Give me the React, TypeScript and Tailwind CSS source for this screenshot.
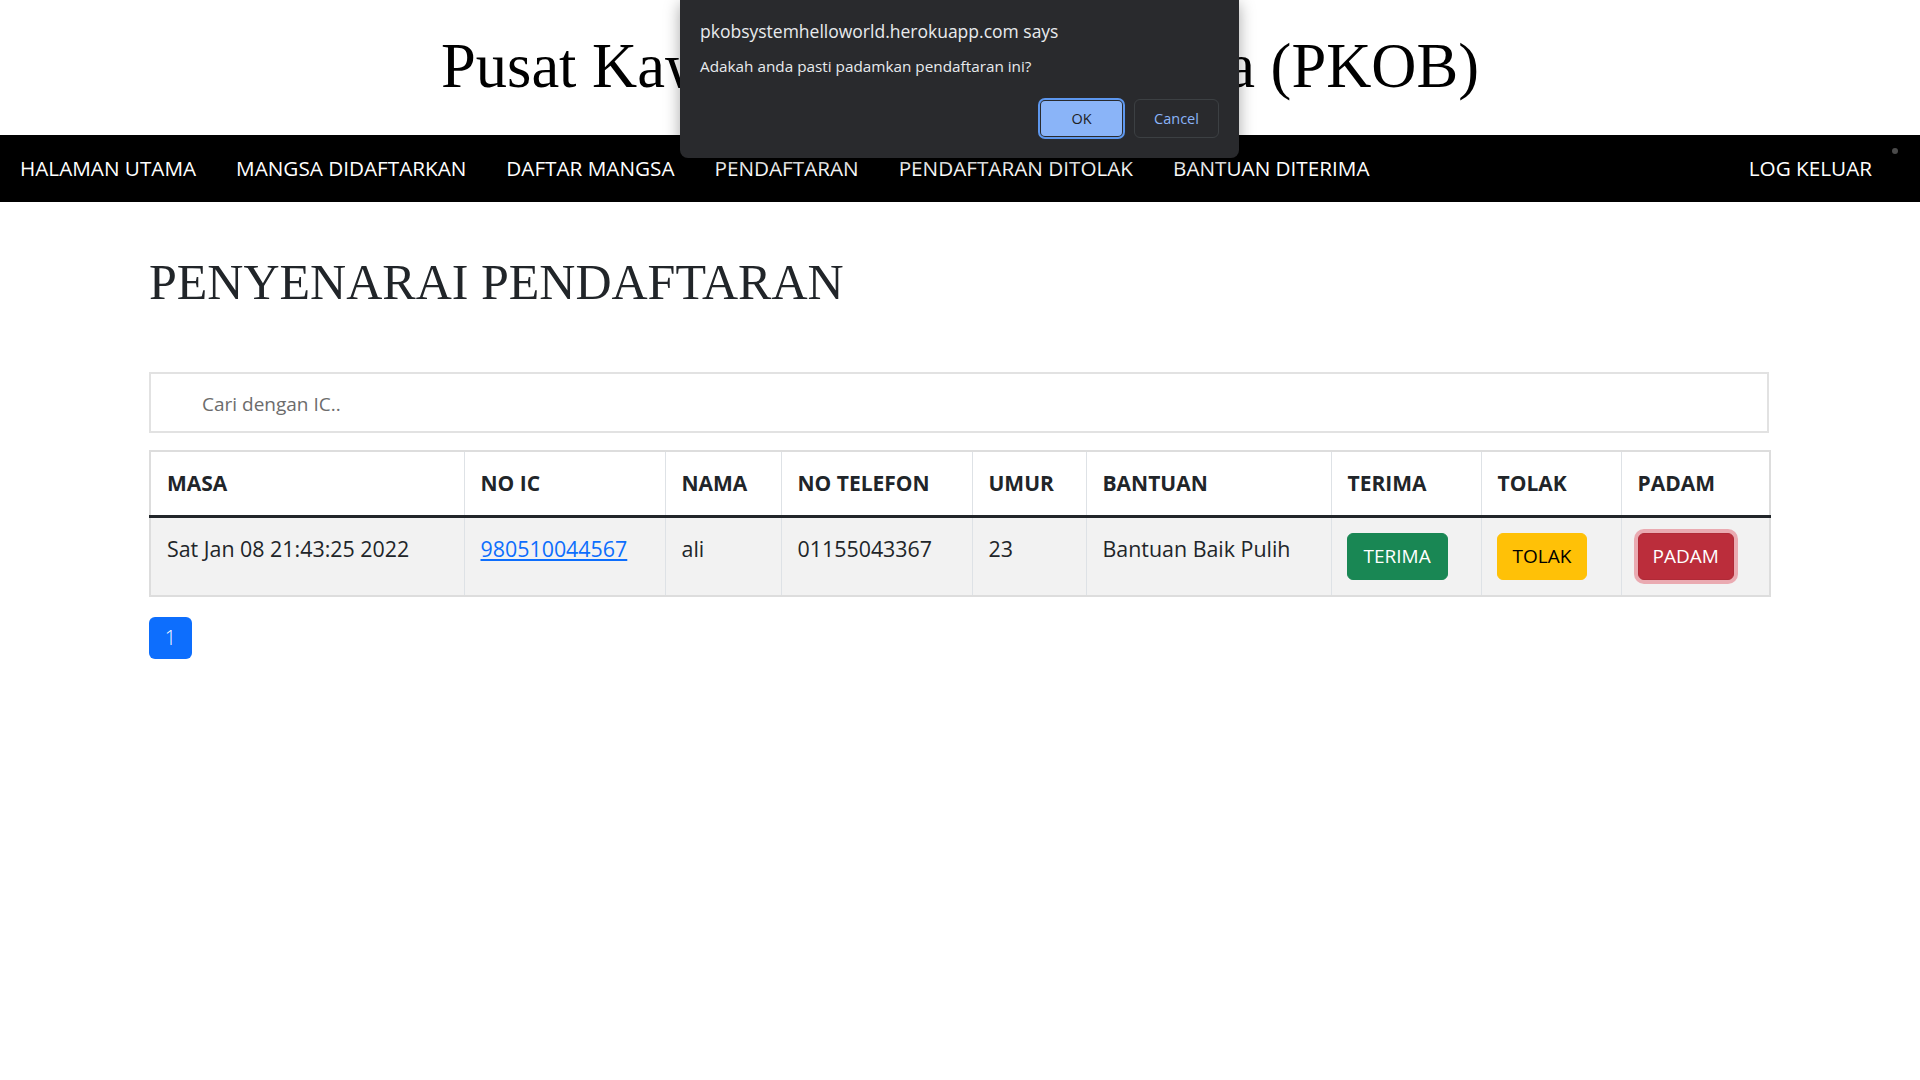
import React from 'react';

const navLinks = [
  'HALAMAN UTAMA',
  'MANGSA DIDAFTARKAN',
  'DAFTAR MANGSA',
  'PENDAFTARAN',
  'PENDAFTARAN DITOLAK',
  'BANTUAN DITERIMA',
];

const cell = 'border-x border-[#dee2e6] px-[16px] pt-[15px] pb-[15px] align-top leading-[32px]';

const App: React.FC = () => {
  return (
    <div className="relative min-h-[1080px] bg-white font-['Open_Sans','Noto_Sans',sans-serif] text-[#212529]">
      {/* Header */}
      <header className="flex h-[135px] items-center justify-center pb-[2px]">
        <h1 className="font-['Liberation_Serif',serif] text-[62.5px] font-normal leading-none text-black">
          Pusat Kawalan Operasi Bencana (PKOB)
        </h1>
      </header>

      {/* Navbar */}
      <nav className="relative flex h-[67px] items-center bg-black pr-[28px] text-[20.7px] text-white">
        {navLinks.map((l) => (
          <a key={l} href="#" className="px-[20px] leading-none">
            {l}
          </a>
        ))}
        <a href="#" className="ml-auto px-[20px] leading-none">
          LOG KELUAR
        </a>
        <span className="absolute left-[1892px] top-[13px] h-[6px] w-[6px] rounded-full bg-[#4a4a4a]" />
      </nav>

      {/* Main */}
      <main className="pl-[149px] pr-[151px]">
        <h2 className="mt-[55px] font-['Liberation_Serif',serif] text-[50px] font-normal leading-none text-[#212529]">
          PENYENARAI PENDAFTARAN
        </h2>

        <div className="mt-[65px] flex h-[61px] items-center border-2 border-[#e2e2e2] pl-[51px] pt-[3px] text-[19px] text-[#6c6c6c]">
          Cari dengan IC..
        </div>

        <table className="mt-[17px] w-[1620px] table-fixed border-collapse border-2 border-[#dddddd] text-[21.4px]">
          <colgroup>
            <col className="w-[314px]" />
            <col className="w-[201px]" />
            <col className="w-[116px]" />
            <col className="w-[191px]" />
            <col className="w-[114px]" />
            <col className="w-[245px]" />
            <col className="w-[150px]" />
            <col className="w-[140px]" />
            <col className="w-[149px]" />
          </colgroup>
          <thead>
            <tr className="h-[65px] bg-white font-bold">
              {['MASA', 'NO IC', 'NAMA', 'NO TELEFON', 'UMUR', 'BANTUAN', 'TERIMA', 'TOLAK', 'PADAM'].map((h) => (
                <th key={h} className="border-x border-[#dee2e6] px-[16px] text-left align-middle text-[21px] leading-[32px]">
                  {h}
                </th>
              ))}
            </tr>
          </thead>
          <tbody>
            <tr className="border-t-[3px] border-t-[#212529] bg-[#f2f2f2]">
              <td className={cell}>Sat Jan 08 21:43:25 2022</td>
              <td className={cell}>
                <a href="#" className="text-[#0d6efd] underline">
                  980510044567
                </a>
              </td>
              <td className={cell}>ali</td>
              <td className={cell}>01155043367</td>
              <td className={cell}>23</td>
              <td className={cell}>Bantuan Baik Pulih</td>
              <td className="border-x border-[#dee2e6] px-[15px] pt-[15px] pb-[15px] align-top">
                <button className="block h-[47px] rounded-[6px] border border-[#198754] bg-[#198754] px-[16px] text-[19px] leading-none text-white">
                  TERIMA
                </button>
              </td>
              <td className="border-x border-[#dee2e6] px-[15px] pt-[15px] pb-[15px] align-top">
                <button className="block h-[47px] rounded-[6px] border border-[#ffc107] bg-[#ffc107] px-[15px] text-[19px] leading-none text-black">
                  TOLAK
                </button>
              </td>
              <td className="border-x border-[#dee2e6] px-[16px] pt-[15px] pb-[15px] align-top">
                <button className="block h-[47px] rounded-[6px] border border-[#b02a37] bg-[#bb2d3b] px-[14px] text-[19px] leading-none text-white shadow-[0_0_0_4px_rgba(225,83,97,0.45)]">
                  PADAM
                </button>
              </td>
            </tr>
          </tbody>
        </table>

        <div className="mt-[20px] flex">
          <span className="flex h-[42px] w-[43px] items-center justify-center rounded-[6px] bg-[#0d6efd] text-[20px] font-light text-white">
            1
          </span>
        </div>
      </main>

      {/* Browser confirm dialog */}
      <div className="absolute left-[680px] top-0 w-[559px] rounded-b-[8px] bg-[#292a2d] px-[20px] pt-[19px] pb-[19px] text-[#e8eaed] shadow-[0_4px_16px_rgba(0,0,0,0.35)]">
        <p className="text-[17.5px] leading-[24px]">pkobsystemhelloworld.herokuapp.com says</p>
        <p className="mt-[12px] text-[15.3px] leading-[22px]">Adakah anda pasti padamkan pendaftaran ini?</p>
        <div className="mt-[21px] flex justify-end gap-[9px]">
          <div className="flex h-[41px] w-[87px] rounded-[7px] border-2 border-[#5d97ee] p-[1px]">
            <button className="flex-1 rounded-[4px] bg-[#8ab4f8] text-[14.5px] font-medium text-[#202124]">OK</button>
          </div>
          <button className="mt-[1px] h-[39px] w-[85px] rounded-[6px] border border-[#3c4043] text-[14.5px] font-medium text-[#8ab4f8]">
            Cancel
          </button>
        </div>
      </div>
    </div>
  );
};

export default App;
